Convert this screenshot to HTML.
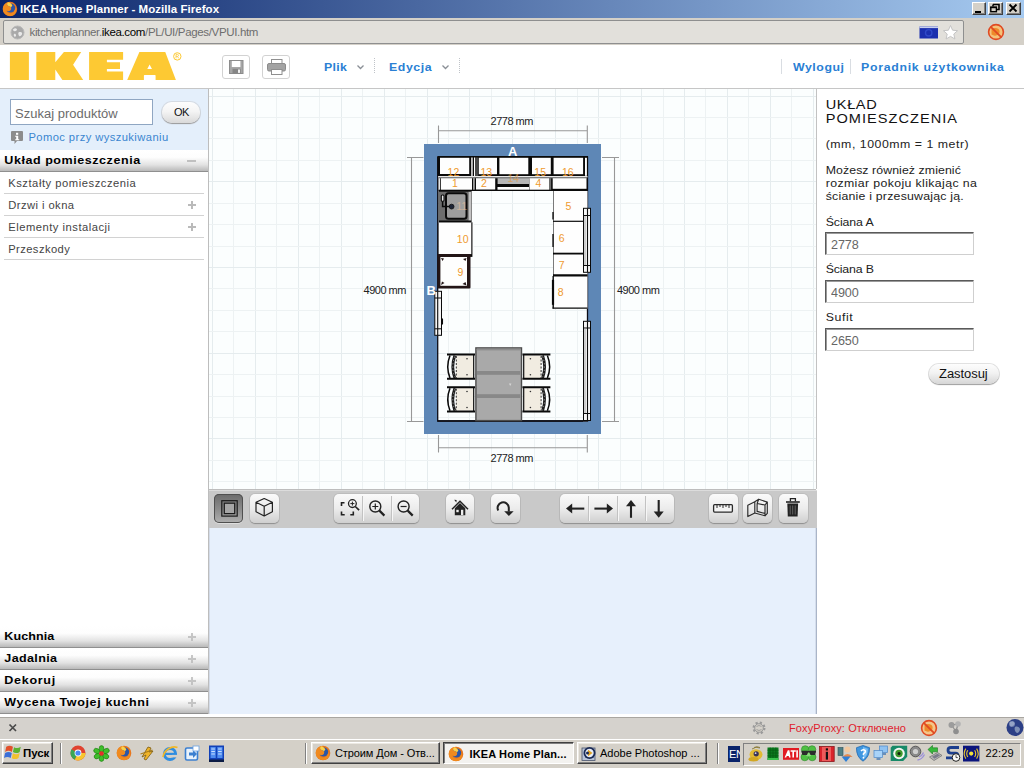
<!DOCTYPE html>
<html>
<head>
<meta charset="utf-8">
<title>IKEA Home Planner - Mozilla Firefox</title>
<style>
*{box-sizing:border-box;margin:0;padding:0}
html,body{width:1024px;height:768px;overflow:hidden;background:#fff;font-family:"Liberation Sans",sans-serif;}
.abs{position:absolute}
#root{position:relative;width:1024px;height:768px;overflow:hidden;background:#fff}
/* title bar */
#title{left:0;top:0;width:1024px;height:18px;background:linear-gradient(90deg,#0a246a 0%,#a6caf0 100%);}
#title .t{left:20px;top:1px;color:#fff;font-weight:bold;font-size:11.5px;line-height:16px;letter-spacing:0.04px;white-space:nowrap}
.wb{top:2px;width:14px;height:13px;background:#d4d0c8;border:1px solid;border-color:#fff #404040 #404040 #fff;box-shadow:inset -1px -1px 0 #808080}
.wb svg{position:absolute;left:-1px;top:-1px}
/* url bar */
#urlbar{left:0;top:18px;width:1024px;height:27px;background:#d4d0c8;}
#urlfield{left:3px;top:2px;width:961px;height:24px;border:1px solid #8e8f8f;border-radius:2px;background:#e2e0db;}
#urltext{left:25.5px;top:4px;font-size:11.5px;line-height:14px;color:#6e6e6e;white-space:nowrap;letter-spacing:-0.34px}
#urltext b{font-weight:normal;color:#000}
/* header */
#header{left:0;top:45px;width:1024px;height:43px;background:#fff;}
#hline{left:0;top:88px;width:1024px;height:1px;background:#c6c6c6}
.menu{color:#2a7fd4;font-weight:bold;font-size:11px;line-height:14px;letter-spacing:0.7px;white-space:nowrap}
.hbtn{width:28px;height:24px;border:1px solid #d2d2d2;border-radius:3px;background:#fff}
.hbtn svg{position:absolute;left:-1px;top:-1px}
.vdot{width:1px;height:15px;background:repeating-linear-gradient(180deg,#bfc3c8 0 1px,transparent 1px 2px)}
.vsep{width:1px;height:15px;background:#d9dde2}
/* sidebar */
#side{left:0;top:89px;width:208px;height:625px;background:#fff;}
#search{left:0;top:0;width:208px;height:61px;background:#e4effb}
#sideedge{left:208px;top:89px;width:1px;height:625px;background:#bdbdbd}
.sec{left:0;width:208px;height:22px;background:linear-gradient(180deg,#ffffff 0%,#fdfdfd 35%,#e3e3e3 70%,#b9b9b9 100%);border-bottom:1px solid #8f8f8f;}
.sec span{position:absolute;left:4px;top:3px;font-weight:bold;font-size:11.5px;line-height:14px;color:#000;letter-spacing:0.55px;white-space:nowrap}
.row{left:4px;width:200px;height:22px;border-bottom:1px solid #d2d2d2;}
.row span{position:absolute;left:4px;top:5px;font-size:10px;line-height:13px;color:#444;letter-spacing:0.6px;white-space:nowrap}
.pl{position:absolute;left:184px;top:7px;width:8px;height:8px;background:linear-gradient(#bababa,#bababa) 0 3px/8px 2px no-repeat,linear-gradient(#bababa,#bababa) 3px 0/2px 8px no-repeat}
.sec .pl{left:188px;top:7px;opacity:.8}
/* canvas */
#canvas{left:209px;top:89px;width:607px;height:400px;background-color:#fbfefe;overflow:hidden}
#toolbar{left:209px;top:490px;width:608px;height:38px;background:#c9c9c9;box-shadow:inset 0 1px 0 #dcdcdc}
#cbl{left:209px;top:489px;width:607px;height:1px;background:#bdbdbd}
.tbtn{top:4px;height:29px;border-radius:5px;background:linear-gradient(180deg,#fafafa 0%,#ececec 50%,#cfcfcf 100%);box-shadow:0 1px 1px #8f8f8f,0 0 0 1px #bdbdbd}
.tbtn.dark{background:linear-gradient(180deg,#6b6b6b 0%,#8e8e8e 55%,#b0b0b0 100%);box-shadow:inset 0 0 0 1px #505050,0 1px 0 #dedede}
.tbtn i{position:absolute;top:2px;width:1px;height:25px;background:#c2c2c2;box-shadow:1px 0 0 #f6f6f6}
#bottom{left:209px;top:528px;width:608px;height:186px;background:#e7f0fc;border-left:1px solid #d3dbe8;border-right:1px solid #aab5c8;box-shadow:inset -1px 0 0 #d5deec}
#right{left:816px;top:89px;width:208px;height:626px;background:#fff;border-left:1px solid #c2c2c2}

.rt{font-size:13px;line-height:14px;color:#111;letter-spacing:1.2px;white-space:nowrap}
.rp{font-size:11px;line-height:13px;color:#222;letter-spacing:0.8px;white-space:nowrap}
.inp{width:149px;height:23px;background:#fff;border:1px solid;border-color:#5a5a5a #cfcfcf #cfcfcf #5a5a5a;box-shadow:inset 1px 1px 0 #9a9a9a}
.inp span{position:absolute;left:5px;top:5px;font-size:12px;line-height:14px;color:#666;letter-spacing:0.25px}
#status{left:0;top:717px;width:1024px;height:22px;background:#d5d2cd;border-top:1px solid #a9a6a1}
#taskbar{left:0;top:739px;width:1024px;height:29px;background:#d4d0c8;border-top:1px solid #fff}
.xbtn{background:#d4d0c8;border:1px solid;border-color:#fff #404040 #404040 #fff;box-shadow:inset -1px -1px 0 #808080,inset 1px 1px 0 #ece9e2}
.xbtn.on{background:#f3f2ef;border-color:#404040 #fff #fff #404040;box-shadow:inset 1px 1px 0 #808080}
.tsep{top:3px;width:2px;height:21px;border-left:1px solid #808080;border-right:1px solid #fff}
.tl{font-size:11px;line-height:13px;color:#000;white-space:nowrap}
</style>
<style id="fits">
#m1{display:inline-block;letter-spacing:0.306px;transform:translateX(0.01px) scaleX(1.120);transform-origin:0 0}
#m2{display:inline-block;letter-spacing:0.517px;transform:translateX(0.01px) scaleX(1.120);transform-origin:0 0}
#m3{display:inline-block;letter-spacing:0.486px;transform:translateX(0.00px) scaleX(1.120);transform-origin:0 0}
#m4{display:inline-block;letter-spacing:0.630px;transform:translateX(0.00px) scaleX(1.120);transform-origin:0 0}
#sq{display:inline-block;letter-spacing:0.023px;transform:translateX(0.00px) scaleX(1.080);transform-origin:0 0}
#pomoc{display:inline-block;letter-spacing:0.368px;transform:translateX(0.40px) scaleX(1.120);transform-origin:0 0}
#okt{display:inline-block;letter-spacing:-0.453px;transform:translateX(0.00px) scaleX(1.000);transform-origin:0 0}
#s1{display:inline-block;letter-spacing:0.497px;transform:translateX(0.30px) scaleX(1.090);transform-origin:0 0}
#s2{display:inline-block;letter-spacing:0.084px;transform:translateX(0.30px) scaleX(1.090);transform-origin:0 0}
#s3{display:inline-block;letter-spacing:0.336px;transform:translateX(0.30px) scaleX(1.090);transform-origin:0 0}
#s4{display:inline-block;letter-spacing:0.644px;transform:translateX(0.30px) scaleX(1.090);transform-origin:0 0}
#s5{display:inline-block;letter-spacing:0.588px;transform:translateX(0.30px) scaleX(1.090);transform-origin:0 0}
#r1{display:inline-block;letter-spacing:0.478px;transform:translateX(0.20px) scaleX(1.120);transform-origin:0 0}
#r2{display:inline-block;letter-spacing:0.394px;transform:translateX(0.20px) scaleX(1.120);transform-origin:0 0}
#r3{display:inline-block;letter-spacing:0.453px;transform:translateX(0.20px) scaleX(1.120);transform-origin:0 0}
#r4{display:inline-block;letter-spacing:0.367px;transform:translateX(0.20px) scaleX(1.120);transform-origin:0 0}
#rt1{display:inline-block;letter-spacing:0.542px;transform:translateX(0.70px) scaleX(1.120);transform-origin:0 0}
#rt2{display:inline-block;letter-spacing:0.918px;transform:translateX(0.70px) scaleX(1.120);transform-origin:0 0}
#rp1{display:inline-block;letter-spacing:0.469px;transform:translateX(0.70px) scaleX(1.120);transform-origin:0 0}
#rp2{display:inline-block;letter-spacing:0.069px;transform:translateX(0.70px) scaleX(1.120);transform-origin:0 0}
#rp3{display:inline-block;letter-spacing:0.335px;transform:translateX(0.70px) scaleX(1.120);transform-origin:0 0}
#rp4{display:inline-block;letter-spacing:0.194px;transform:translateX(0.70px) scaleX(1.120);transform-origin:0 0}
#rp5{display:inline-block;letter-spacing:-0.071px;transform:translateX(0.70px) scaleX(1.120);transform-origin:0 0}
#rp6{display:inline-block;letter-spacing:-0.136px;transform:translateX(0.70px) scaleX(1.120);transform-origin:0 0}
#rp7{display:inline-block;letter-spacing:0.525px;transform:translateX(0.70px) scaleX(1.120);transform-origin:0 0}
#i1{display:inline-block;letter-spacing:-0.081px;transform:translateX(0.00px) scaleX(1.050);transform-origin:0 0}
#i2{display:inline-block;letter-spacing:-0.081px;transform:translateX(0.00px) scaleX(1.050);transform-origin:0 0}
#i3{display:inline-block;letter-spacing:-0.081px;transform:translateX(0.00px) scaleX(1.050);transform-origin:0 0}
#zt{display:inline-block;letter-spacing:-0.033px;transform:translateX(0.01px) scaleX(1.080);transform-origin:0 0}
</style>
</head>
<body>
<div id="root">
<div id="title" class="abs">
<svg class="abs" style="left:2px;top:1px" width="16" height="16" viewBox="0 0 16 16">
<circle cx="8" cy="8" r="7.2" fill="#e8761c"/>
<circle cx="8.6" cy="7" r="4.6" fill="#2b56a8"/>
<path d="M1 6 C2 3 4 1.5 6 1.2 C4.6 3 5 4.4 6.6 5 C8.5 5.5 9.8 6.6 9 8.6 C8.2 10.5 5.6 10.6 4.4 9.2 C4.4 11.6 7 13 9.6 12.2 C12 11.4 13.4 9 13 6.4 C14.6 8.4 14.6 11.4 12.6 13.4 C10 15.8 5.6 15.6 3 13 C1 11 0.4 8.4 1 6Z" fill="#f08a1e"/>
<path d="M6 1.2 C4.6 3 5 4.4 6.6 5 C7.6 5.3 8.6 5.8 9 6.6 L10.4 4.2 C9.4 2.6 7.8 1.4 6 1.2Z" fill="#fbd24a"/>
</svg>
<div class="t abs">IKEA Home Planner - Mozilla Firefox</div>
<div class="wb abs" style="left:972px"><svg width="14" height="13" viewBox="0 0 14 13"><rect x="3" y="9" width="6" height="2" fill="#000"/></svg></div>
<div class="wb abs" style="left:988px;width:15px"><svg width="15" height="13" viewBox="0 0 15 13"><path d="M5 2.5h6v5h-2 M5 2.5v2" fill="none" stroke="#000" stroke-width="1.6"/><rect x="2.8" y="5.3" width="5.6" height="4.4" fill="none" stroke="#000" stroke-width="1.4"/><path d="M2.2 5.4h6.8" stroke="#000" stroke-width="1.6"/></svg></div>
<div class="wb abs" style="left:1006px;width:15px"><svg width="15" height="13" viewBox="0 0 15 13"><path d="M3.5 2.5l7 7 M10.5 2.5l-7 7" stroke="#000" stroke-width="1.8"/></svg></div>
</div>
<div id="urlbar" class="abs"><div id="urlfield" class="abs">
<svg class="abs" style="left:6px;top:4px" width="15" height="15" viewBox="0 0 15 15"><circle cx="7.5" cy="7.5" r="6.5" fill="#a9a9a9"/><circle cx="7.5" cy="7.5" r="6.5" fill="none" stroke="#b9b9b9" stroke-width="1"/><path d="M3 4.5c1.5-1.5 3-1.5 3.8-.5 .6 1-.6 2-2 2.2-1 .2-1.6-.6-1.8-1.700z M8.500 7.500c1.200-.8 3-.6 3.600 .6 .4 1.400-.8 3-2.200 3.200-1.200 0-2-2.600-1.400-3.800z M4 9c.8-.4 1.800 0 2 1 .2 1-.6 2-1.400 1.800-.8-.4-1.200-2-.6-2.800z" fill="#e9e9e9"/></svg>
<div id="urltext" class="abs">kitchenplanner.<b>ikea.com</b>/PL/UI/Pages/VPUI.htm</div>
<svg class="abs" style="left:915px;top:4px" width="20" height="15" viewBox="0 0 20 15"><rect x="0.500" y="1.500" width="18.500" height="12" fill="#1b2fae"/><rect x="0.500" y="1.500" width="18.500" height="1.600" fill="#c8d0f0"/><circle cx="9.700" cy="7.800" r="3.200" fill="none" stroke="#2f49c8" stroke-width="1.400"/></svg>
<svg class="abs" style="left:938px;top:3px" width="17" height="17" viewBox="0 0 17 17"><path d="M8.500 1.500l2.100 4.700 5 .5-3.800 3.300 1.100 5-4.400-2.600-4.400 2.600 1.100-5-3.800-3.300 5-.5z" fill="#fff" stroke="#c4c4c4" stroke-width="1"/></svg>
</div>
<svg class="abs" style="left:987px;top:5px" width="18" height="18" viewBox="0 0 18 18"><circle cx="9" cy="9" r="7.400" fill="#f5c27a" stroke="#e04a22" stroke-width="1.600"/><path d="M4.500 6c2-1.500 5-1.500 7 0 1.500 1.500 1.500 4 0 5.500-2 1.500-5 1.500-7 0z" fill="#ee8a2a"/><path d="M3.800 3.800l10.400 10.400" stroke="#e04a22" stroke-width="1.800"/></svg>
</div>
<div id="header" class="abs">
<svg class="abs" style="left:8px;top:5px" width="178" height="34" viewBox="8 50 178 34">
<g fill="#fdc933">
<rect x="9.900" y="52" width="19" height="28"/>
<path d="M36.300 52H55.300V62.200L63.900 52H81.200L73.100 64.800L83.200 80H62.400L55.300 69.400V80H36.300Z"/>
<path d="M89.100 52H123.100V59.700H106.900V62.250H120V68.900H106.900V71.400H123.100V80H89.100Z"/>
<path d="M139.400 52H165.250L175.900 80H155.600V75.600Q155.600 74.900 154.900 74.900H144.600Q143.900 74.900 143.900 75.600V80H127.200Z M149.600 64.500L152 68.900H147.300Z" fill-rule="evenodd"/>
</g>
<circle cx="177.300" cy="56.400" r="3.700" fill="none" stroke="#fdc933" stroke-width="1"/>
<path d="M176 58.400v-4h1.500c1.400 0 1.400 2 0 2h-1.500 M177.500 56.400l1.200 2" fill="none" stroke="#fdc933" stroke-width="0.800"/>
</svg>
<div class="hbtn abs" style="left:222px;top:10px"><svg width="27" height="24" viewBox="0 0 27 24"><rect x="7.500" y="5.500" width="13.500" height="13" fill="#a6a6a6" stroke="#8c8c8c"/><rect x="9.800" y="6" width="8.600" height="6" fill="#fff"/><rect x="10.500" y="13.800" width="8.200" height="4.700" fill="#868686"/><rect x="16" y="14.500" width="2" height="3.400" fill="#f2f2f2"/></svg></div>
<div class="hbtn abs" style="left:262px;top:10px"><svg width="27" height="24" viewBox="0 0 27 24"><rect x="9.500" y="4.500" width="10.500" height="5" fill="#fff" stroke="#8f8f8f"/><rect x="5.500" y="8.500" width="18" height="7.500" rx="1.500" fill="#a3a3a3" stroke="#8c8c8c"/><rect x="9.500" y="14.500" width="10.500" height="5" fill="#fff" stroke="#8f8f8f"/></svg></div>
<div class="menu abs" id="m1" style="left:324.400px;top:15px">Plik</div>
<svg class="abs" style="left:356px;top:19px" width="9" height="7" viewBox="0 0 9 7"><path d="M1.500 1.500l3 3 3-3" fill="none" stroke="#8a8f96" stroke-width="1.300"/></svg>
<div class="vdot abs" style="left:374px;top:13px"></div>
<div class="menu abs" id="m2" style="left:389.200px;top:15px">Edycja</div>
<svg class="abs" style="left:441px;top:19px" width="9" height="7" viewBox="0 0 9 7"><path d="M1.500 1.500l3 3 3-3" fill="none" stroke="#8a8f96" stroke-width="1.300"/></svg>
<div class="vdot abs" style="left:459px;top:13px"></div>
<div class="vsep abs" style="left:781px;top:14px"></div>
<div class="menu abs" id="m3" style="left:793px;top:15px">Wyloguj</div>
<div class="vsep abs" style="left:850px;top:14px"></div>
<div class="menu abs" id="m4" style="left:861px;top:15px">Poradnik użytkownika</div>
</div>
<div id="hline" class="abs"></div>
<div id="side" class="abs"><div id="search" class="abs">
<div class="abs" style="left:10px;top:10px;width:143px;height:26px;border:1px solid #8fa6c2;background:#fff"></div>
<div class="abs" style="left:15px;top:18px;font-size:12px;line-height:14px;color:#6b6b6b;white-space:nowrap" id="sq">Szukaj produktów</div>
<div class="abs" id="okbtn" style="left:162px;top:13px;width:38px;height:21px;border-radius:10px;background:linear-gradient(180deg,#fdfdfd 0%,#f4f4f4 45%,#d9d9d9 100%);box-shadow:0 1px 1px #9a9a9a,0 0 0 1px #d5dbe3"><span class="abs" id="okt" style="left:12px;top:3px;font-size:11px;line-height:14px;color:#111">OK</span></div>
<svg class="abs" style="left:10px;top:41px" width="14" height="15" viewBox="0 0 14 15"><path d="M2 1h10a1 1 0 0 1 1 1v8a1 1 0 0 1-1 1h-5l-2.500 3v-3h-2.500a1 1 0 0 1-1-1v-8a1 1 0 0 1 1-1z" fill="#8c8c8c"/><rect x="6" y="2.800" width="2.200" height="2" fill="#fff"/><path d="M5.200 5.800h3v3.400h1v1h-4v-1h1v-2.400h-1z" fill="#fff"/></svg>
<div class="abs" id="pomoc" style="left:28px;top:42px;font-size:10px;line-height:13px;color:#3a86d0;white-space:nowrap">Pomoc przy wyszukiwaniu</div>
</div>
<div class="sec abs" style="top:61px"><span id="s1">Układ pomieszczenia</span><i class="abs" style="left:187px;top:10px;width:9px;height:2px;background:#c0c0c0"></i></div>
<div class="row abs" style="top:83px"><span id="r1">Kształty pomieszczenia</span></div>
<div class="row abs" style="top:105px"><span id="r2">Drzwi i okna</span><i class="pl"></i></div>
<div class="row abs" style="top:127px"><span id="r3">Elementy instalacji</span><i class="pl"></i></div>
<div class="row abs" style="top:149px"><span id="r4">Przeszkody</span></div>
<div class="sec abs" style="top:537px"><span id="s2">Kuchnia</span><i class="pl"></i></div>
<div class="sec abs" style="top:559px"><span id="s3">Jadalnia</span><i class="pl"></i></div>
<div class="sec abs" style="top:581px"><span id="s4">Dekoruj</span><i class="pl"></i></div>
<div class="sec abs" style="top:603px"><span id="s5">Wycena Twojej kuchni</span><i class="pl"></i></div>
</div>
<div id="sideedge" class="abs"></div>
<div id="canvas" class="abs"><svg class="abs" style="left:0;top:0" width="607" height="400" viewBox="209 89 607 400" shape-rendering="auto"><g shape-rendering="crispEdges" stroke-width="1"><path d="M212.5 89V489" stroke="#e5ecee"/><path d="M233.9 89V489" stroke="#edf2f3"/><path d="M255.4 89V489" stroke="#e5ecee"/><path d="M276.9 89V489" stroke="#edf2f3"/><path d="M298.3 89V489" stroke="#e5ecee"/><path d="M319.8 89V489" stroke="#edf2f3"/><path d="M341.2 89V489" stroke="#e5ecee"/><path d="M362.6 89V489" stroke="#edf2f3"/><path d="M384.1 89V489" stroke="#e5ecee"/><path d="M405.5 89V489" stroke="#edf2f3"/><path d="M427.0 89V489" stroke="#e5ecee"/><path d="M448.4 89V489" stroke="#edf2f3"/><path d="M469.9 89V489" stroke="#e5ecee"/><path d="M491.3 89V489" stroke="#edf2f3"/><path d="M512.8 89V489" stroke="#e5ecee"/><path d="M534.2 89V489" stroke="#edf2f3"/><path d="M555.7 89V489" stroke="#e5ecee"/><path d="M577.1 89V489" stroke="#edf2f3"/><path d="M598.6 89V489" stroke="#e5ecee"/><path d="M620.0 89V489" stroke="#edf2f3"/><path d="M641.5 89V489" stroke="#e5ecee"/><path d="M663.0 89V489" stroke="#edf2f3"/><path d="M684.4 89V489" stroke="#e5ecee"/><path d="M705.8 89V489" stroke="#edf2f3"/><path d="M727.3 89V489" stroke="#e5ecee"/><path d="M748.8 89V489" stroke="#edf2f3"/><path d="M770.2 89V489" stroke="#e5ecee"/><path d="M791.6 89V489" stroke="#edf2f3"/><path d="M813.1 89V489" stroke="#e5ecee"/><path d="M209 96.1H816" stroke="#e5ecee"/><path d="M209 117.5H816" stroke="#edf2f3"/><path d="M209 138.9H816" stroke="#edf2f3"/><path d="M209 160.4H816" stroke="#edf2f3"/><path d="M209 181.8H816" stroke="#e5ecee"/><path d="M209 203.2H816" stroke="#edf2f3"/><path d="M209 224.6H816" stroke="#edf2f3"/><path d="M209 246.0H816" stroke="#edf2f3"/><path d="M209 267.5H816" stroke="#e5ecee"/><path d="M209 288.9H816" stroke="#edf2f3"/><path d="M209 310.3H816" stroke="#edf2f3"/><path d="M209 331.7H816" stroke="#edf2f3"/><path d="M209 353.1H816" stroke="#e5ecee"/><path d="M209 374.6H816" stroke="#edf2f3"/><path d="M209 396.0H816" stroke="#edf2f3"/><path d="M209 417.4H816" stroke="#edf2f3"/><path d="M209 438.8H816" stroke="#e5ecee"/><path d="M209 460.2H816" stroke="#edf2f3"/><path d="M209 481.7H816" stroke="#edf2f3"/></g>
<!-- wall -->
<path d="M424 144H601V434H424Z M437.500 156.500V421.500H587.800V156.500Z" fill="#5e87b6" fill-rule="evenodd"/>
<g id="dims" stroke="#989898" stroke-width="1.100" fill="none">
<path d="M438.500 130.800H587.300 M438.500 125.500V143 M587.300 125.500V143"/>
<path d="M438.500 447.800H587.300 M438.500 435V452.500 M587.300 435V452.500"/>
<path d="M411.500 157.500V421.500 M407 157.500H423.500 M407 421.500H423.500"/>
<path d="M614.500 157.500V421.500 M602 157.500H619 M602 421.500H619"/>
</g>
<g font-family="Liberation Sans, sans-serif" font-size="11" fill="#222" letter-spacing="-0.5">
<text x="490.600" y="125">2778 mm</text>
<text x="490.600" y="461.800">2778 mm</text>
<text x="363.600" y="294">4900 mm</text>
<text x="617" y="294">4900 mm</text>
</g>
<!-- room inner outline -->
<path d="M437.700 156.500V421 H587.500 V156.500" fill="none" stroke="#0b0b14" stroke-width="1.300"/><path d="M437.500 421H583" stroke="#0b0b14" stroke-width="1.700"/>
<!-- top wall cabinets -->
<rect x="437.500" y="156" width="150.500" height="20" fill="#0a0a0a"/>
<g fill="#fefefe">
<rect x="440" y="157.800" width="29.200" height="16.200"/>
<rect x="471.250" y="157.500" width="1.400" height="34"/>
<rect x="474" y="157.500" width="1" height="34"/>
<rect x="478.750" y="157.800" width="18.250" height="16.400"/>
<rect x="499.400" y="157.800" width="28.900" height="16.400"/>
<rect x="532" y="157.800" width="18.800" height="16.400"/>
<rect x="553.600" y="157.800" width="29.500" height="16.400"/>
<rect x="585" y="157.800" width="1.900" height="18"/>
</g>
<rect x="475" y="157.500" width="3.300" height="20" fill="#4a4a4a"/>
<!-- strip under wall cabinets -->
<rect x="438.500" y="176" width="149" height="1.500" fill="#e9e9e9"/>
<rect x="438.500" y="177.400" width="149" height="0.900" fill="#333"/>
<!-- base cabinets top row -->
<rect x="438.500" y="178.200" width="149" height="12.800" fill="#0a0a0a"/>
<g fill="#fefefe">
<rect x="438.700" y="178.200" width="1.200" height="11.500"/>
<rect x="440.800" y="178.200" width="31.200" height="11.500"/>
<rect x="473.400" y="178.200" width="1.100" height="11.500"/>
<rect x="476" y="178.200" width="19.200" height="11.300"/>
<rect x="529.400" y="178.200" width="20" height="11.500"/>
<rect x="552.700" y="178.200" width="33.800" height="10.600"/>
<rect x="497.500" y="187" width="31.500" height="2.700"/>
</g>
<rect x="497.600" y="178.200" width="32" height="5.800" fill="#b7b7b7"/>
<rect x="550.300" y="178.200" width="0.800" height="11.500" fill="#999"/>
<!-- sink unit -->
<rect x="438.600" y="190.400" width="33" height="32.200" fill="#0a0a0a"/>
<rect x="439" y="191.700" width="29.400" height="28.800" fill="#6d6d6d"/>
<rect x="468.400" y="191.700" width="2.900" height="28.800" fill="#c3c3c3"/>
<rect x="446" y="193.200" width="20.500" height="25.600" rx="2.500" fill="#9d9d9d" stroke="#0a0a0a" stroke-width="2"/>
<rect x="441.300" y="195" width="2.700" height="6.200" rx="1" fill="#e9e9e9" stroke="#0a0a0a" stroke-width="1.100"/>
<path d="M442.600 201.500V206.600H450" fill="none" stroke="#0a0a0a" stroke-width="1.500"/>
<circle cx="451.600" cy="206.600" r="2.400" fill="#1c2436" stroke="#0a0a0a" stroke-width="0.800"/>
<!-- cabinet 10 -->
<rect x="438.600" y="222.600" width="34" height="34.300" fill="#0a0a0a"/>
<rect x="439" y="222.600" width="32.200" height="31.500" fill="#fefefe"/>
<rect x="471.200" y="222.600" width="1.500" height="31.500" fill="#5c5c5c"/>
<rect x="472.700" y="222.600" width="1" height="34.300" fill="#fbfdfd"/>
<!-- cabinet 9 -->
<rect x="437.500" y="254" width="33" height="34.400" rx="1" fill="#231516"/>
<rect x="440.400" y="257" width="26.600" height="28.800" fill="#fefefe"/>
<path d="M441 258l3 .5-1.500 2.500z M466.500 258l-3.500 1 2.500 2z M441 285l1-3.500 2.500 1.500z M466.500 285.500l-4-1.500 3-2z" fill="#231516"/>
<!-- right column cabinets -->
<rect x="553" y="191" width="34.500" height="117.800" fill="#fefefe"/>
<path d="M553.500 191V276" stroke="#7a7a7a" stroke-width="1"/>
<path d="M553.200 276V308.500" stroke="#0a0a0a" stroke-width="1.400"/>
<path d="M553 279.800V304.800" stroke="#0a0a0a" stroke-width="2.200"/>
<path d="M553 212V219.500 M553 234V247" stroke="#0a0a0a" stroke-width="1.300"/>
<path d="M553 221.300H583.500" stroke="#0a0a0a" stroke-width="1.200"/>
<path d="M553 253.600H583.500" stroke="#0a0a0a" stroke-width="1.800"/>
<path d="M553 275.400H587.500" stroke="#0a0a0a" stroke-width="2.400"/>
<path d="M552.500 308.200H587.500" stroke="#0a0a0a" stroke-width="1.300"/>
<!-- windows -->
<g stroke="#0a0a0a" stroke-width="1" fill="#f6f6f6">
<rect x="583.500" y="208.300" width="7" height="64"/>
<path d="M583.500 215.500H590.500 M583.500 265.500H590.500" />
<rect x="583.500" y="321.300" width="7" height="99.200"/>
<path d="M583.500 328H590.500 M583.500 413.500H590.500"/>
<rect x="434.800" y="291.300" width="6.700" height="44"/>
<path d="M434.800 298H441.500 M434.800 328.800H441.500"/>
</g>
<path d="M587.500 208.500V272 M587.500 321.500V420.500 M437.700 291.500V335" stroke="#0a0a0a" stroke-width="1.100"/>
<path d="M585 216V265 M585 328.500V413" stroke="#a4a4a4" stroke-width="1"/>
<path d="M442.300 318.500V324.500" stroke="#0a0a0a" stroke-width="1.500"/>
<!-- chairs -->
<g id="chairL1">
<rect x="456.200" y="355.500" width="17.300" height="22.500" fill="#f1ece1"/>
<path d="M447 354.500H475 M447 378.800H475" stroke="#0a0a0a" stroke-width="2"/>
<path d="M473.700 355V379" stroke="#0a0a0a" stroke-width="1.200"/>
<path d="M450 355.500Q445.500 366.700 450 378" fill="none" stroke="#0a0a0a" stroke-width="1.500"/><path d="M454.800 355.500Q450.800 366.700 454.800 378" fill="none" stroke="#1c1c1c" stroke-width="2.800"/><path d="M454.800 356.500Q450.800 366.700 454.800 377" fill="none" stroke="#9a9a9a" stroke-width="1" stroke-dasharray="1.200 2.200"/>
<path d="M456.300 356V378" stroke="#333" stroke-width="1" stroke-dasharray="2 1.500"/>
<circle cx="467" cy="358.800" r="0.800" fill="#333"/><circle cx="467" cy="374.800" r="0.800" fill="#333"/>
</g>
<use href="#chairL1" y="32.700"/>
<use href="#chairL1" transform="translate(997.400 0) scale(-1 1)"/>
<use href="#chairL1" transform="translate(997.400 32.700) scale(-1 1)"/>
<!-- table -->
<rect x="475.900" y="347.900" width="45.600" height="72.700" fill="#a9a9a9" stroke="#4c4c4c" stroke-width="1.400"/>
<rect x="477" y="371" width="43.400" height="3.800" fill="#888"/>
<rect x="477" y="394.200" width="43.400" height="3.800" fill="#888"/>
<rect x="476.600" y="348.600" width="44.200" height="1.800" fill="#8e8e8e"/>
<path d="M509 383.500l1.200 2.500 1.200-2.500z" fill="#d8d8d8"/>
<!-- labels -->
<g font-family="Liberation Sans, sans-serif" font-size="10.500" fill="#ef9a2e">
<text x="447.600" y="175.600">12</text>
<text x="480.400" y="175.600">13</text>
<text x="507.500" y="181.800" fill="#e29a44" opacity="0.700">14</text>
<text x="534.300" y="175.600">15</text>
<text x="562" y="175.600">16</text>
<text x="452" y="186.800">1</text>
<text x="481" y="186.800">2</text>
<text x="535.500" y="186.800">4</text>
<text x="565.400" y="209.900">5</text>
<text x="558.700" y="242">6</text>
<text x="558.700" y="269">7</text>
<text x="557.700" y="295.800">8</text>
<text x="456.800" y="242.700">10</text>
<text x="457.500" y="275.900">9</text>
<text x="456.300" y="210" fill="#f0c49a" opacity="0.550">11</text>
</g>
<g font-family="Liberation Sans, sans-serif" font-size="13" font-weight="bold" fill="#fff">
<text x="508" y="155.700">A</text>
<text x="426.500" y="294.500">B</text>
</g>
</svg></div>
<div id="cbl" class="abs"></div>
<div id="toolbar" class="abs">
<div class="tbtn dark abs" style="left:5px;width:29px"></div>
<div class="tbtn abs" style="left:41px;width:29px"></div>
<div class="tbtn abs" style="left:125px;width:85px"><i style="left:28px"></i><i style="left:57px"></i></div>
<div class="tbtn abs" style="left:237px;width:28px"></div>
<div class="tbtn abs" style="left:282px;width:29px"></div>
<div class="tbtn abs" style="left:351px;width:114px"><i style="left:28px"></i><i style="left:57px"></i><i style="left:85px"></i></div>
<div class="tbtn abs" style="left:500px;width:29px"></div>
<div class="tbtn abs" style="left:534px;width:29px"></div>
<div class="tbtn abs" style="left:570px;width:29px"></div>
<svg class="abs" style="left:0;top:0" width="607" height="38" viewBox="209 490 607 38" fill="none" stroke="#222" stroke-linecap="butt">
<!-- 2D icon -->
<rect x="221.800" y="500.700" width="15.400" height="15.400" stroke="#1a1a1a" stroke-width="1.200" fill="none"/>
<rect x="224.300" y="503.200" width="10.400" height="10.400" stroke="#1a1a1a" stroke-width="1.200" fill="#a6a6a6"/>
<!-- 3D cube -->
<path d="M264.200 498.500l8.200 3.800v9.400l-8.200 4.300-8.200-4.300v-9.400z M256 502.300l8.200 3.900 8.200-3.900 M264.200 506.200v9.800" stroke="#222" stroke-width="1.200" stroke-linejoin="round"/>
<!-- zoom fit -->
<path d="M344.500 502.800h-3v3.200 M341.500 511.500v3.300h3.200 M350.300 514.800h3v-3.300" stroke="#222" stroke-width="1.600"/>
<circle cx="352.400" cy="503.600" r="3.900" stroke="#222" stroke-width="1.300"/>
<path d="M350.400 503.600h4 M352.400 501.600v4" stroke="#222" stroke-width="1"/>
<path d="M355.300 506.500l3.800 3.600" stroke="#222" stroke-width="1.700"/>
<!-- zoom in -->
<circle cx="375.300" cy="506.500" r="5.500" stroke="#222" stroke-width="1.400"/>
<path d="M372.300 506.500h6 M375.300 503.500v6" stroke="#222" stroke-width="1.200"/>
<path d="M379.400 510.600l5 5" stroke="#222" stroke-width="2.200"/>
<!-- zoom out -->
<circle cx="403.600" cy="506.500" r="5.500" stroke="#222" stroke-width="1.400"/>
<path d="M400.600 506.500h6" stroke="#222" stroke-width="1.200"/>
<path d="M407.700 510.600l5 5" stroke="#222" stroke-width="2.200"/>
<!-- home -->
<path d="M452 509.200l8-8 8 8" stroke="#222" stroke-width="1.500"/>
<path d="M454.800 508.300l5.200-5.200 5.300 5.200v7h-10.500z" fill="#222" stroke="none"/>
<rect x="456.300" y="509.800" width="2.400" height="2.400" fill="#eee" stroke="none"/>
<rect x="461" y="509.800" width="2.300" height="5.200" fill="#eee" stroke="none"/>
<path d="M454.200 499.800l2.400 .3-.3 2.300z" fill="#222" stroke="none"/>
<!-- rotate -->
<path d="M498.300 510.600A5.600 5.600 0 1 1 508.800 507.600V511.600" stroke="#222" stroke-width="2"/>
<path d="M504.200 511.200h9.400l-4.700 4.800z" fill="#222" stroke="none"/>
<!-- arrows -->
<path d="M570 508.600h14.300" stroke="#222" stroke-width="2.100"/><path d="M566 508.600l6.200-5v10z" fill="#222" stroke="none"/>
<path d="M594.400 508.600h14.300" stroke="#222" stroke-width="2.100"/><path d="M613 508.600l-6.200-5v10z" fill="#222" stroke="none"/>
<path d="M631 504v13.800" stroke="#222" stroke-width="2.100"/><path d="M631 500l-5 6.200h10z" fill="#222" stroke="none"/>
<path d="M658.700 500v13.800" stroke="#222" stroke-width="2.100"/><path d="M658.700 517.800l-5-6.200h10z" fill="#222" stroke="none"/>
<!-- ruler -->
<rect x="713.600" y="504.700" width="18.800" height="7.400" rx="1" fill="#f4f4f4" stroke="#2a2a2a" stroke-width="1.300"/>
<path d="M717 505v3 M720 505v2 M723 505v3 M726 505v2 M729 505v3" stroke="#2a2a2a" stroke-width="1"/>
<!-- cabinet -->
<path d="M747.800 505.200L754.800 501.700V513L747.800 516.600Z M754.800 501.700L758.700 499.200L767.300 502.100V513.400L765 515.800L754.800 513 M757.100 503.500L765 505V515.800 M757.100 503.500V511.400L765 513.500 M757.100 503.500L758.700 499.200 M765 505L767.300 502.100" stroke="#2a2a2a" stroke-width="1.150" stroke-linejoin="round"/>
<!-- trash -->
<path d="M786 502h13.800" stroke="#222" stroke-width="1.600"/>
<path d="M790.400 501.200v-2.600h5v2.600" stroke="#222" stroke-width="1.300"/>
<path d="M787.300 503.600h10.800l-.5 12.900h-9.800z" fill="#222" stroke="none"/>
<path d="M790.200 505.500v9 M792.700 505.500v9 M795.200 505.500v9" stroke="#6a6a6a" stroke-width="0.900"/>
</svg>
</div>
<div id="bottom" class="abs"></div>
<div id="right" class="abs" style="height:400px"></div>
<div id="right2" class="abs" style="left:817px;top:89px;width:207px;height:626px">
<div class="rt abs" id="rt1" style="left:8px;top:9px">UKŁAD</div>
<div class="rt abs" id="rt2" style="left:8px;top:23px">POMIESZCZENIA</div>
<div class="rp abs" id="rp1" style="left:8px;top:49px">(mm, 1000mm = 1 metr)</div>
<div class="rp abs" id="rp2" style="left:8px;top:75px">Możesz również zmienić</div>
<div class="rp abs" id="rp3" style="left:8px;top:88px">rozmiar pokoju klikając na</div>
<div class="rp abs" id="rp4" style="left:8px;top:101px">ścianie i przesuwając ją.</div>
<div class="rp abs" id="rp5" style="left:8px;top:127px">Ściana A</div>
<div class="inp abs" style="left:8px;top:143px"><span id="i1">2778</span></div>
<div class="rp abs" id="rp6" style="left:8px;top:174px">Ściana B</div>
<div class="inp abs" style="left:8px;top:191px"><span id="i2">4900</span></div>
<div class="rp abs" id="rp7" style="left:8px;top:222px">Sufit</div>
<div class="inp abs" style="left:8px;top:239px"><span id="i3">2650</span></div>
<div class="abs" id="zast" style="left:112px;top:275px;width:70px;height:20px;border-radius:10px;background:linear-gradient(180deg,#fdfdfd 0%,#f2f2f2 45%,#d6d6d6 100%);box-shadow:0 1px 1px #a0a0a0,0 0 0 1px #e1e1e1"><span class="abs" id="zt" style="left:10.400px;top:3px;font-size:12px;line-height:14px;color:#111;white-space:nowrap">Zastosuj</span></div>
</div>
<div id="status" class="abs">
<svg class="abs" style="left:8px;top:5px" width="10" height="10" viewBox="0 0 10 10"><path d="M1.500 1.500l6.500 6.500 M8 1.500l-6.500 6.500" stroke="#4a4a4a" stroke-width="1.700"/></svg>
<svg class="abs" style="left:750px;top:1px" width="18" height="18" viewBox="0 0 18 18"><circle cx="9" cy="9" r="5.200" fill="none" stroke="#9a9a9a" stroke-width="2.600" stroke-dasharray="2.100 2"/><circle cx="9" cy="9" r="4.300" fill="#d4d0c8" stroke="#9a9a9a" stroke-width="1"/><path d="M6.500 7.500q2.500-2 5 0 M6.500 10.500q2.500 2 5 0" stroke="#9a9a9a" fill="none" stroke-width="0.900"/></svg>
<div class="abs" id="foxy" style="left:789px;top:3.500px;font-size:11px;line-height:13px;color:#e0202c;white-space:nowrap;letter-spacing:0.100px">FoxyProxy: Отключено</div>
<svg class="abs" style="left:920px;top:1px" width="18" height="18" viewBox="0 0 18 18"><circle cx="9" cy="9" r="7.400" fill="#f4c58a" stroke="#e04a22" stroke-width="1.600"/><path d="M4.500 6c2-1.500 5-1.500 7 0 1.500 1.500 1.500 4 0 5.500-2 1.500-5 1.500-7 0z" fill="#ee8a2a"/><path d="M3.800 3.800l10.400 10.400" stroke="#e04a22" stroke-width="1.800"/></svg>
<svg class="abs" style="left:947px;top:2px" width="16" height="16" viewBox="0 0 16 16"><path d="M4.500 5l6.500-1 M4.500 5l4.500 6.500 M11 4l-2 7.500" stroke="#8c8c8c" stroke-width="1.200"/><circle cx="4.500" cy="5" r="3" fill="#9c9c9c"/><circle cx="11" cy="4" r="2.800" fill="#b4b4b4"/><circle cx="9" cy="11.500" r="2.800" fill="#8e8e8e"/></svg>
<svg class="abs" style="left:1005px;top:0px" width="19" height="19" viewBox="0 0 19 19"><circle cx="10" cy="9.500" r="8.500" fill="#2c3f86"/><path d="M5 4c2-1 4-.5 4.500 1 .5 2-1.500 3-3 3.500-1.500 0-2.500-2.500-1.500-4.500z M10 9c2-1 4.500 0 5 2 0 2-1.500 4-3 4-2-.5-3-4-2-6z" fill="#7e8fb6"/><circle cx="7" cy="6" r="3" fill="#aeb9d6" opacity="0.500"/></svg>
</div>
<div id="taskbar" class="abs">
<div class="abs xbtn" style="left:2px;top:2px;width:51px;height:22px">
<svg class="abs" style="left:1px;top:0px" width="19" height="20" viewBox="0 1 17 16"><path d="M2 3.500q3-2 6 0l-1 4.500q-3-2-6 0z" fill="#e3502a"/><path d="M9 3.800q3 1.800 6-.3l-1 4.500q-3 2-6 .2z" fill="#5bb230"/><path d="M1 9q3-2 6 0l-1 4.500q-3-2-6 0z" fill="#3b6fd8"/><path d="M8 9.200q3 1.800 6-.3l-1 4.500q-3 2-6 .2z" fill="#f2c12e"/></svg>
<span class="abs" style="left:20px;top:4px;font-weight:bold;font-size:11.500px;line-height:13px;color:#000;letter-spacing:-0.100px">Пуск</span></div>
<div class="abs tsep" style="left:60px"></div>
<svg class="abs" style="left:70px;top:5px" width="16" height="16" viewBox="0 0 16 16"><circle cx="8" cy="8" r="7.500" fill="#e0422f"/><path d="M8 8L1.500 4.300A7.500 7.500 0 0 0 4.800 14.800z" fill="#3aa757"/><path d="M8 8l-3.200 6.800A7.500 7.500 0 0 0 15.500 8z" fill="#f7c62f"/><circle cx="8" cy="8" r="3.400" fill="#fff"/><circle cx="8" cy="8" r="2.600" fill="#4a8af4"/></svg>
<svg class="abs" style="left:93px;top:5px" width="17" height="17" viewBox="0 0 17 17"><g fill="#3fbf2a" stroke="#1d7a12" stroke-width="0.600"><ellipse cx="8.500" cy="3.800" rx="2.400" ry="3.200"/><ellipse cx="8.500" cy="13.200" rx="2.400" ry="3.200"/><ellipse cx="3.800" cy="6" rx="3.200" ry="2.400" transform="rotate(25 3.800 6)"/><ellipse cx="13.200" cy="6" rx="3.200" ry="2.400" transform="rotate(-25 13.200 6)"/><ellipse cx="4.200" cy="11.200" rx="3.200" ry="2.400" transform="rotate(-30 4.200 11.200)"/><ellipse cx="12.800" cy="11.200" rx="3.200" ry="2.400" transform="rotate(30 12.800 11.200)"/></g><circle cx="8.500" cy="8.500" r="2.300" fill="#e5302a"/></svg>
<svg class="abs" style="left:116px;top:5px" width="16" height="16" viewBox="0 0 16 16"><circle cx="8" cy="8" r="7.300" fill="#e8761c"/><circle cx="8.600" cy="7" r="4.600" fill="#2b56a8"/><path d="M1 6C2 3 4 1.500 6 1.200C4.600 3 5 4.400 6.600 5C8.500 5.500 9.800 6.600 9 8.600C8.200 10.500 5.600 10.600 4.400 9.200C4.400 11.600 7 13 9.600 12.200C12 11.400 13.400 9 13 6.400C14.600 8.400 14.600 11.400 12.600 13.400C10 15.800 5.600 15.600 3 13C1 11 .4 8.400 1 6Z" fill="#f08a1e"/><path d="M6 1.200C4.600 3 5 4.400 6.600 5C7.600 5.300 8.600 5.800 9 6.600L10.400 4.200C9.400 2.600 7.800 1.400 6 1.200Z" fill="#fbd24a"/></svg>
<svg class="abs" style="left:139px;top:5px" width="16" height="16" viewBox="0 0 16 16"><path d="M3 12L9 2l3 1-2 4 4-1-7 9-2-1 2-4z" fill="#f0b428" stroke="#7a5a10" stroke-width="0.800"/><path d="M1.500 9l12-4" stroke="#a87c18" stroke-width="1.200"/></svg>
<svg class="abs" style="left:161px;top:4px" width="18" height="18" viewBox="0 0 18 18"><circle cx="9" cy="10" r="5.600" fill="none" stroke="#2f8de0" stroke-width="3"/><rect x="5" y="8.800" width="9" height="2.200" fill="#2f8de0"/><rect x="11" y="10.900" width="5" height="2.500" fill="#d4d0c8"/><path d="M2 13C3 6 11 1 16.500 3.500" fill="none" stroke="#f1b82a" stroke-width="1.700"/></svg>
<svg class="abs" style="left:184px;top:5px" width="17" height="17" viewBox="0 0 17 17"><rect x="1.500" y="3" width="12" height="12" rx="1.500" fill="#e9f2fb" stroke="#3b7fd0" stroke-width="1.600"/><path d="M5 10.500V7.500h4V5l4 4-4 4v-2.500z" fill="#3b7fd0"/><rect x="9" y="1" width="6" height="5" fill="#fff" stroke="#6aa0e0" stroke-width="0.800"/></svg>
<svg class="abs" style="left:208px;top:4px" width="17" height="19" viewBox="0 0 17 19"><rect x="1" y="1.500" width="15" height="15" fill="#1241b8"/><rect x="2.500" y="3" width="5.200" height="11" fill="#4f8df0"/><rect x="9.300" y="3" width="5.200" height="11" fill="#4f8df0"/><path d="M3.300 5h3.600M3.300 7.500h3.600M3.300 10h3.600M10.100 5h3.600M10.100 7.500h3.600M10.100 10h3.600" stroke="#d6e6ff" stroke-width="0.900"/><rect x="1" y="15.500" width="15" height="2.500" fill="#0c1c44"/></svg>
<div class="abs tsep" style="left:305px"></div>
<div class="abs xbtn" style="left:311px;top:2px;width:129px;height:22px"><svg class="abs" style="left:3px;top:2px" width="16" height="16" viewBox="0 0 16 16"><circle cx="8" cy="8" r="7.300" fill="#e8761c"/><circle cx="8.600" cy="7" r="4.600" fill="#2b56a8"/><path d="M1 6C2 3 4 1.500 6 1.200C4.600 3 5 4.400 6.600 5C8.500 5.500 9.800 6.600 9 8.600C8.200 10.500 5.600 10.600 4.400 9.200C4.400 11.600 7 13 9.600 12.200C12 11.400 13.400 9 13 6.400C14.600 8.400 14.600 11.400 12.600 13.400C10 15.800 5.600 15.600 3 13C1 11 .4 8.400 1 6Z" fill="#f08a1e"/><path d="M6 1.200C4.600 3 5 4.400 6.600 5C7.600 5.300 8.600 5.800 9 6.600L10.400 4.200C9.400 2.600 7.800 1.400 6 1.200Z" fill="#fbd24a"/></svg><span class="abs tl" id="tb1" style="left:23px;top:4px;letter-spacing:-0.100px">Строим Дом - Отв...</span></div>
<div class="abs xbtn on" style="left:443px;top:2px;width:131px;height:22px"><svg class="abs" style="left:4px;top:3px" width="16" height="16" viewBox="0 0 16 16"><circle cx="8" cy="8" r="7.300" fill="#e8761c"/><circle cx="8.600" cy="7" r="4.600" fill="#2b56a8"/><path d="M1 6C2 3 4 1.500 6 1.200C4.600 3 5 4.400 6.600 5C8.500 5.500 9.800 6.600 9 8.600C8.200 10.500 5.600 10.600 4.400 9.200C4.400 11.600 7 13 9.600 12.200C12 11.400 13.400 9 13 6.400C14.600 8.400 14.600 11.400 12.600 13.400C10 15.800 5.600 15.600 3 13C1 11 .4 8.400 1 6Z" fill="#f08a1e"/><path d="M6 1.200C4.600 3 5 4.400 6.600 5C7.600 5.300 8.600 5.800 9 6.600L10.400 4.200C9.400 2.600 7.800 1.400 6 1.200Z" fill="#fbd24a"/></svg><span class="abs tl" id="tb2" style="left:25.500px;top:5px;font-weight:bold;letter-spacing:0.130px">IKEA Home Plan...</span></div>
<div class="abs xbtn" style="left:577px;top:2px;width:130px;height:22px"><svg class="abs" style="left:3px;top:2px" width="17" height="17" viewBox="0 0 17 17"><rect x="1" y="3" width="13" height="12.500" fill="#b9c4d8" stroke="#49536b" stroke-width="0.800"/><circle cx="8.500" cy="8" r="6" fill="#1a2a55"/><circle cx="8.500" cy="8" r="4.200" fill="#e8eef8"/><path d="M7 4.800l4.500 3.200-4.500 3.200z" fill="#e0a020"/><circle cx="6.500" cy="8" r="1.500" fill="#1a2a55"/></svg><span class="abs tl" id="tb3" style="left:22px;top:4px">Adobe Photoshop ...</span></div>
<div class="abs tsep" style="left:717px"></div>
<div class="abs" style="left:728px;top:6px;width:12px;height:16px;background:#0a246a;overflow:hidden"><span class="abs" style="left:1px;top:2px;color:#fff;font-size:11px;line-height:12px;letter-spacing:-0.300px">EN</span></div>
<div class="abs" id="tray" style="left:743px;top:3px;width:278px;height:23px;border:1px solid;border-color:#808080 #fff #fff #808080"></div>
<svg class="abs" style="left:744px;top:3px" width="240" height="22" viewBox="744 743 240 22">
<!-- webcam -->
<ellipse cx="756" cy="754.500" rx="6.500" ry="5.200" fill="#e3bb33"/><ellipse cx="753.500" cy="759.300" rx="5" ry="2.200" fill="#d2a722"/><circle cx="756.200" cy="753.800" r="2.600" fill="#3a3357"/><circle cx="755.600" cy="753.200" r="0.900" fill="#cfd3ea"/><path d="M752 749q4-3 8-1 M754 747.500q3-1.500 6 0" stroke="#8a7a3a" stroke-width="0.900" fill="none"/>
<!-- green grid -->
<rect x="767.500" y="747.500" width="11" height="12.500" fill="#0b7a1e"/><rect x="767.500" y="758" width="11" height="2" fill="#39c24c"/><path d="M770.200 747.500v10.500M773 747.500v10.500M775.800 747.500v10.500M767.500 750.200h11M767.500 753h11M767.500 755.800h11" stroke="#075a14" stroke-width="0.700"/>
<!-- ATI -->
<rect x="783" y="748" width="16" height="11.800" fill="#e11b22"/><path d="M784.600 757.600l3.200-7.400h1.600l1.200 7.400h-1.600l-.2-1.600h-2l-.6 1.600z M790.600 750.200h5.200v1.500h-1.800v5.900h-1.600v-5.900h-1.800z M796.300 750.200h1.600v7.400h-1.600z" fill="#fff"/>
<!-- clover -->
<g fill="#4fbf43" stroke="#2d8a2a" stroke-width="0.600"><circle cx="805.200" cy="749.500" r="3.800"/><circle cx="812" cy="749.500" r="3.800"/><circle cx="804.800" cy="757" r="3.800"/><circle cx="812.200" cy="757" r="3.800"/></g><circle cx="808.600" cy="753.400" r="3" fill="#8ad97c"/>
<path d="M801.500 750.800h14.500v1.200l-1 3h-4.500l-1.200-2.600h-1.200l-1.200 2.600h-4.500l-.9-3z" fill="#2b2b2b"/>
<!-- red i -->
<rect x="819.500" y="746.500" width="14.700" height="15" fill="#d9232b"/><rect x="822" y="746.500" width="9" height="15" fill="#ee5a5a"/><rect x="819.500" y="746.500" width="14.700" height="15" fill="none" stroke="#8a1a1e" stroke-width="0.800"/><rect x="825.800" y="748.300" width="2.200" height="2.200" fill="#111"/><rect x="825.800" y="751.800" width="2.200" height="7.800" fill="#111"/>
<!-- people -->
<rect x="838" y="747.500" width="5" height="8" fill="#4d7f86" stroke="#2f4f54" stroke-width="0.600"/><circle cx="847.500" cy="749.500" r="3" fill="#f2c9a0"/><path d="M842.500 757q5-6 10 0z" fill="#e98a4c"/><path d="M841.500 756.500h9l-4.500 5.500z" fill="#2f7fd6"/>
<!-- shield -->
<path d="M863 745.500l6.500 2.200q.3 9-6.500 13.500q-6.800-4.500-6.500-13.500z" fill="#3f97e0" stroke="#1f68b0" stroke-width="0.800"/><path d="M863 747l4.800 1.700q.2 7-4.800 10.600z" fill="#7cc0f4"/><path d="M861 751q2.200-2.400 4.200-.4q.8 1.600-1.800 3.200v1.200 M863.400 757v1.400" stroke="#fff" stroke-width="1.500" fill="none"/>
<!-- monitors -->
<rect x="879.500" y="746" width="8" height="6.500" fill="#8fc2f2" stroke="#4a86c8" stroke-width="0.700"/><rect x="874" y="750.500" width="8.500" height="7" fill="#a9d3f8" stroke="#4a86c8" stroke-width="0.700"/><rect x="876.500" y="758" width="4" height="2" fill="#6a8fb8"/><rect x="882.500" y="753" width="3.500" height="2" fill="#6a8fb8"/>
<!-- eye -->
<path d="M892.500 745.700h14.700v11l-4 4.300h-12.500v-13.300z" fill="#178a68"/><circle cx="899" cy="753.500" r="5.800" fill="#f4f7f4"/><circle cx="899" cy="753.500" r="3.700" fill="#3f9a2c"/><circle cx="899" cy="753.500" r="1.500" fill="#102010"/>
<!-- speaker -->
<circle cx="915.500" cy="751.500" r="5.300" fill="#8a8a8a" stroke="#4e4e4e" stroke-width="0.900"/><circle cx="915.500" cy="751.500" r="2.600" fill="#cfcfcf"/><path d="M919 757q3-1 4.500-4.500 M917.500 760q4.500-.5 7-5.500" stroke="#9a90d8" stroke-width="1.300" fill="none"/>
<!-- drive arrow -->
<path d="M929.500 757l8-4.500 4.500 3-8 5z" fill="#b8b8b8" stroke="#6a6a6a" stroke-width="0.700"/><path d="M932 756.800l5.500-3 2.500 1.700-5.500 3.300z" fill="#7a7a8a"/><path d="M928 749.500l4.500-4v2.300h5v4h-5v2.200z" fill="#35b83a" stroke="#1a7a22" stroke-width="0.600"/>
<!-- S clock -->
<path d="M959 747.500h-8q-3 0-3 2.800t3 2.800h4.500q2.500 0 2.500 2.400t-2.500 2.400h-9.500" fill="none" stroke="#1d3f8e" stroke-width="2.800"/><circle cx="956" cy="757.500" r="3.800" fill="#fbfbfb" stroke="#222" stroke-width="1"/><path d="M956 755.200v2.400h1.800" stroke="#222" stroke-width="0.800" fill="none"/>
<!-- radio -->
<rect x="963" y="745.700" width="16.400" height="15.800" fill="#0b157c"/><circle cx="971.200" cy="753.600" r="2.100" fill="#f2e23a"/><path d="M967.800 750.200q-2.200 3.400 0 6.800 M974.600 750.200q2.200 3.400 0 6.800 M965.800 748.600q-3.200 5 0 10 M976.600 748.600q3.200 5 0 10" stroke="#e8c62a" stroke-width="1.100" fill="none"/>
</svg>
<div class="abs" id="clock" style="left:985.500px;top:7px;font-size:11px;line-height:13px;color:#000;letter-spacing:0.150px">22:29</div>
</div>
</div>
</body>
</html>
